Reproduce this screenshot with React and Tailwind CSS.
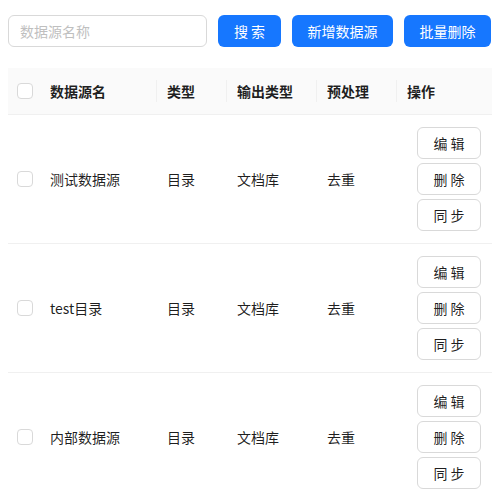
import React from 'react';

const rows = [
  { name: '测试数据源', type: '目录', output: '文档库', pre: '去重' },
  { name: 'test目录', type: '目录', output: '文档库', pre: '去重' },
  { name: '内部数据源', type: '目录', output: '文档库', pre: '去重' },
];

const Checkbox = () => (
  <span className="block w-4 h-4 rounded-[4px] border border-[#d9d9d9] bg-white" />
);

const Sep = () => <span className="absolute right-0 top-1/2 -translate-y-1/2 w-px h-[22px] bg-[#f0f0f0]" />;

const App = () => {
  return (
    <div className="w-[500px] h-[500px] overflow-hidden bg-white text-[14px] text-[rgba(0,0,0,0.88)] font-['Noto_Sans_CJK_SC','Noto_Sans',sans-serif]">
      {/* Toolbar */}
      <div className="flex items-center gap-[11px] pl-2 pt-[15px]">
        <input
          placeholder="数据源名称"
          className="w-[199px] h-[32px] px-[11px] rounded-[6px] border border-[#d9d9d9] outline-none placeholder:text-[#bfbfbf] text-[14px]"
        />
        <button className="w-[63px] h-[32px] rounded-[6px] bg-[#1677ff] text-white">搜 索</button>
        <button className="w-[101px] h-[32px] rounded-[6px] bg-[#1677ff] text-white">新增数据源</button>
        <button className="w-[87px] h-[32px] rounded-[6px] bg-[#1677ff] text-white">批量删除</button>
      </div>

      {/* Table */}
      <div className="ml-2 mt-[21px] w-[484px]">
        <div className="flex items-center h-[47px] bg-[#fafafa] border-b border-[#f0f0f0] font-bold">
          <div className="w-[31px] flex justify-center pl-[2px]"><Checkbox /></div>
          <div className="relative w-[118px] pl-[11px] h-full flex items-center">数据源名<Sep /></div>
          <div className="relative w-[70px] pl-[10px] h-full flex items-center">类型<Sep /></div>
          <div className="relative w-[90px] pl-[10px] h-full flex items-center">输出类型<Sep /></div>
          <div className="relative w-[80px] pl-[10px] h-full flex items-center">预处理<Sep /></div>
          <div className="w-[95px] pl-[10px] h-full flex items-center">操作</div>
        </div>
        {rows.map((r) => (
          <div key={r.name} className="flex items-center h-[129px] border-b border-[#f0f0f0]">
            <div className="w-[31px] flex justify-center pl-[2px]"><Checkbox /></div>
            <div className="w-[118px] pl-[11px]">{r.name}</div>
            <div className="w-[70px] pl-[10px]">{r.type}</div>
            <div className="w-[90px] pl-[10px]">{r.output}</div>
            <div className="w-[80px] pl-[10px]">{r.pre}</div>
            <div className="w-[95px] pl-[20px] flex flex-col gap-1">
              {['编 辑', '删 除', '同 步'].map((t) => (
                <button key={t} className="w-[64px] h-[32px] rounded-[6px] border border-[#d9d9d9] bg-white">{t}</button>
              ))}
            </div>
          </div>
        ))}
      </div>
    </div>
  );
};

export default App;
